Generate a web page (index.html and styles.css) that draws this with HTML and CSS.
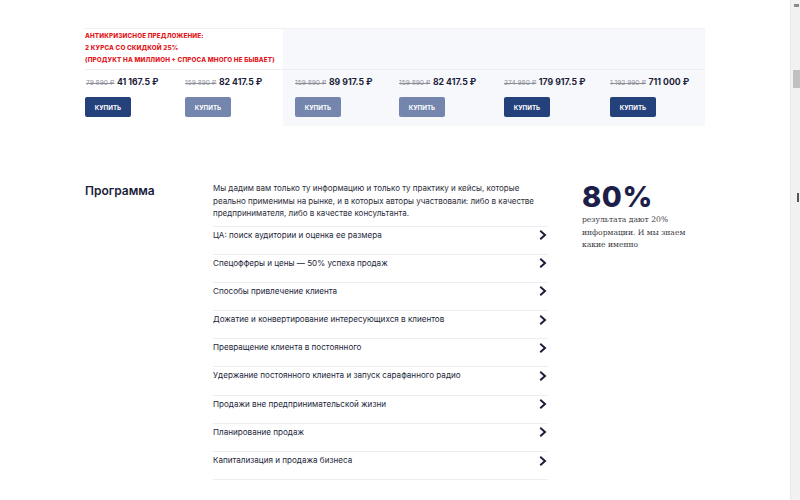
FILE: index.html
```html
<!DOCTYPE html>
<html lang="ru">
<head>
<meta charset="utf-8">
<link rel="stylesheet" href="styles.css">
</head>
<body>
<div class="page">
  <main class="content">
    <section class="prices">
      <div class="cell offer">
        <p>Антикризисное предложение:</p>
        <p>2 курса со скидкой 25%</p>
        <p>(продукт на миллион + спроса много не бывает)</p>
      </div>
      <div class="cell head light"></div>
      <div class="cell head light"></div>
      <div class="cell head light"></div>
      <div class="cell head light"></div>

      <div class="cell price c1">
        <div class="amount"><s>79 890 ₽</s> <b>41 167.5 ₽</b></div>
        <button class="buy">КУПИТЬ</button>
      </div>
      <div class="cell price c2">
        <div class="amount"><s>159 890 ₽</s> <b>82 417.5 ₽</b></div>
        <button class="buy muted">КУПИТЬ</button>
      </div>
      <div class="cell price light">
        <div class="amount"><s>159 890 ₽</s> <b>89 917.5 ₽</b></div>
        <button class="buy muted">КУПИТЬ</button>
      </div>
      <div class="cell price light">
        <div class="amount"><s>159 890 ₽</s> <b>82 417.5 ₽</b></div>
        <button class="buy muted">КУПИТЬ</button>
      </div>
      <div class="cell price light">
        <div class="amount"><s>374 980 ₽</s> <b>179 917.5 ₽</b></div>
        <button class="buy">КУПИТЬ</button>
      </div>
      <div class="cell price light">
        <div class="amount"><s>1 192 990 ₽</s> <b>711 000 ₽</b></div>
        <button class="buy">КУПИТЬ</button>
      </div>
    </section>

    <section class="program">
      <h2 class="title">Программа</h2>
      <div class="body">
        <p class="intro">Мы дадим вам только ту информацию и только ту практику и кейсы, которые реально применимы на рынке, и в которых авторы участвовали: либо в качестве предпринимателя, либо в качестве консультанта.</p>
        <ul class="list">
          <li><span>ЦА: поиск аудитории и оценка ее размера</span><svg class="chev" viewBox="0 0 8 10"><polyline points="2,1.5 6,5 2,8.5"/></svg></li>
          <li><span>Спецофферы и цены — 50% успеха продаж</span><svg class="chev" viewBox="0 0 8 10"><polyline points="2,1.5 6,5 2,8.5"/></svg></li>
          <li><span>Способы привлечение клиента</span><svg class="chev" viewBox="0 0 8 10"><polyline points="2,1.5 6,5 2,8.5"/></svg></li>
          <li><span>Дожатие и конвертирование интересующихся в клиентов</span><svg class="chev" viewBox="0 0 8 10"><polyline points="2,1.5 6,5 2,8.5"/></svg></li>
          <li><span>Превращение клиента в постоянного</span><svg class="chev" viewBox="0 0 8 10"><polyline points="2,1.5 6,5 2,8.5"/></svg></li>
          <li><span>Удержание постоянного клиента и запуск сарафанного радио</span><svg class="chev" viewBox="0 0 8 10"><polyline points="2,1.5 6,5 2,8.5"/></svg></li>
          <li><span>Продажи вне предпринимательской жизни</span><svg class="chev" viewBox="0 0 8 10"><polyline points="2,1.5 6,5 2,8.5"/></svg></li>
          <li><span>Планирование продаж</span><svg class="chev" viewBox="0 0 8 10"><polyline points="2,1.5 6,5 2,8.5"/></svg></li>
          <li><span>Капитализация и продажа бизнеса</span><svg class="chev" viewBox="0 0 8 10"><polyline points="2,1.5 6,5 2,8.5"/></svg></li>
        </ul>
      </div>
      <aside class="stat">
        <div class="big">80%</div>
        <p class="note">результата дают 20% информации. И мы знаем какие именно</p>
      </aside>
    </section>
  </main>
  <div class="scrollbar">
    <div class="arrow"></div>
    <div class="thumb"></div>
    <div class="mark"></div>
  </div>
</div>
</body>
</html>
```

FILE: styles.css
```css
* { box-sizing: border-box; }
html, body { margin: 0; padding: 0; background: #fff; }
body { font-family: Inter, "Noto Sans", sans-serif; color: #1c1f3a; }
.page { display: flex; width: 800px; height: 500px; overflow: hidden; }
.content { flex: 1; padding: 28px 0 0 85px; }

.prices {
  display: grid;
  width: 620px;
  grid-template-columns: 100px 98px 104px 105px 106px 107px;
  grid-template-rows: 41px 56px;
  border-top: 1px solid #eef0f3;
}
.cell { min-width: 0; }
.light { background: #f7f8fb; }
.offer {
  grid-column: 1 / 3;
  padding-top: 1px;
  border-bottom: 1px solid #eceef2;
}
.head { border-bottom: 1px solid #eceef2; }
.offer p {
  margin: 0;
  font-size: 6.3px;
  line-height: 12px;
  font-weight: 800;
  letter-spacing: 0.15px;
  color: #e3161c;
  text-transform: uppercase;
  white-space: nowrap;
}
.price { padding: 6px 0 0 12px; }
.price.c1 { padding-left: 1px; }
.price.c2 { padding-left: 0; }
.amount { font-size: 8.7px; line-height: 12px; white-space: nowrap; }
.amount s { font-size: 6.6px; color: #8c8f9a; font-weight: 400; }
.amount b { font-weight: 700; color: #1b1d3a; }
.buy {
  display: block;
  margin-top: 8px;
  width: 46px;
  height: 20px;
  padding: 0;
  border: 0;
  border-radius: 2px;
  background: #24417b;
  color: #fff;
  font-family: Inter, sans-serif;
  font-size: 6.2px;
  font-weight: 700;
}
.price.c1 .buy { margin-left: -1px; }
.buy.muted { background: #7486ad; }

.program {
  display: grid;
  grid-template-columns: 128px 335px 1fr;
  padding-top: 56px;
}
.title {
  margin: 0;
  font-size: 12px;
  line-height: 18px;
  font-weight: 600;
  color: #1c1f3a;
}
.intro {
  margin: 0 0 6px;
  font-size: 8px;
  line-height: 12.5px;
  color: #2b2d3a;
}
.list { list-style: none; margin: 0; padding: 0; border-bottom: 1px solid #eceef2; }
.list li {
  display: flex;
  justify-content: space-between;
  align-items: center;
  border-top: 1px solid #eceef2;
  padding: 3px 0 13.2px;
  font-size: 8.1px;
  line-height: 11px;
  color: #1c1f3a;
}
.chev { width: 8px; height: 10px; margin-right: 1px; }
.chev polyline { fill: none; stroke: #1b1d3a; stroke-width: 2; stroke-linecap: square; }

.stat { padding-left: 34px; }
.big {
  font-size: 29px;
  line-height: 29px;
  font-weight: 800;
  color: #1d1f4a;
  letter-spacing: 0.6px;
}
.note {
  max-width: 110px;
  margin: 3px 0 0;
  font-family: "DejaVu Serif", serif;
  font-size: 7.6px;
  line-height: 12.5px;
  color: #3a3a44;
}

.scrollbar { position: relative; width: 10px; background: #f1f1f1; border-left: 1px solid #e8e8e8; }
.thumb { position: absolute; left: 2px; top: 70px; width: 7px; height: 18px; background: #c1c1c1; }
.arrow { position: absolute; left: 3px; top: 4px; width: 5px; height: 3px; background: #8a8a8a; }
.mark { position: absolute; right: 1px; top: 193px; width: 2px; height: 9px; background: #555; }
```
